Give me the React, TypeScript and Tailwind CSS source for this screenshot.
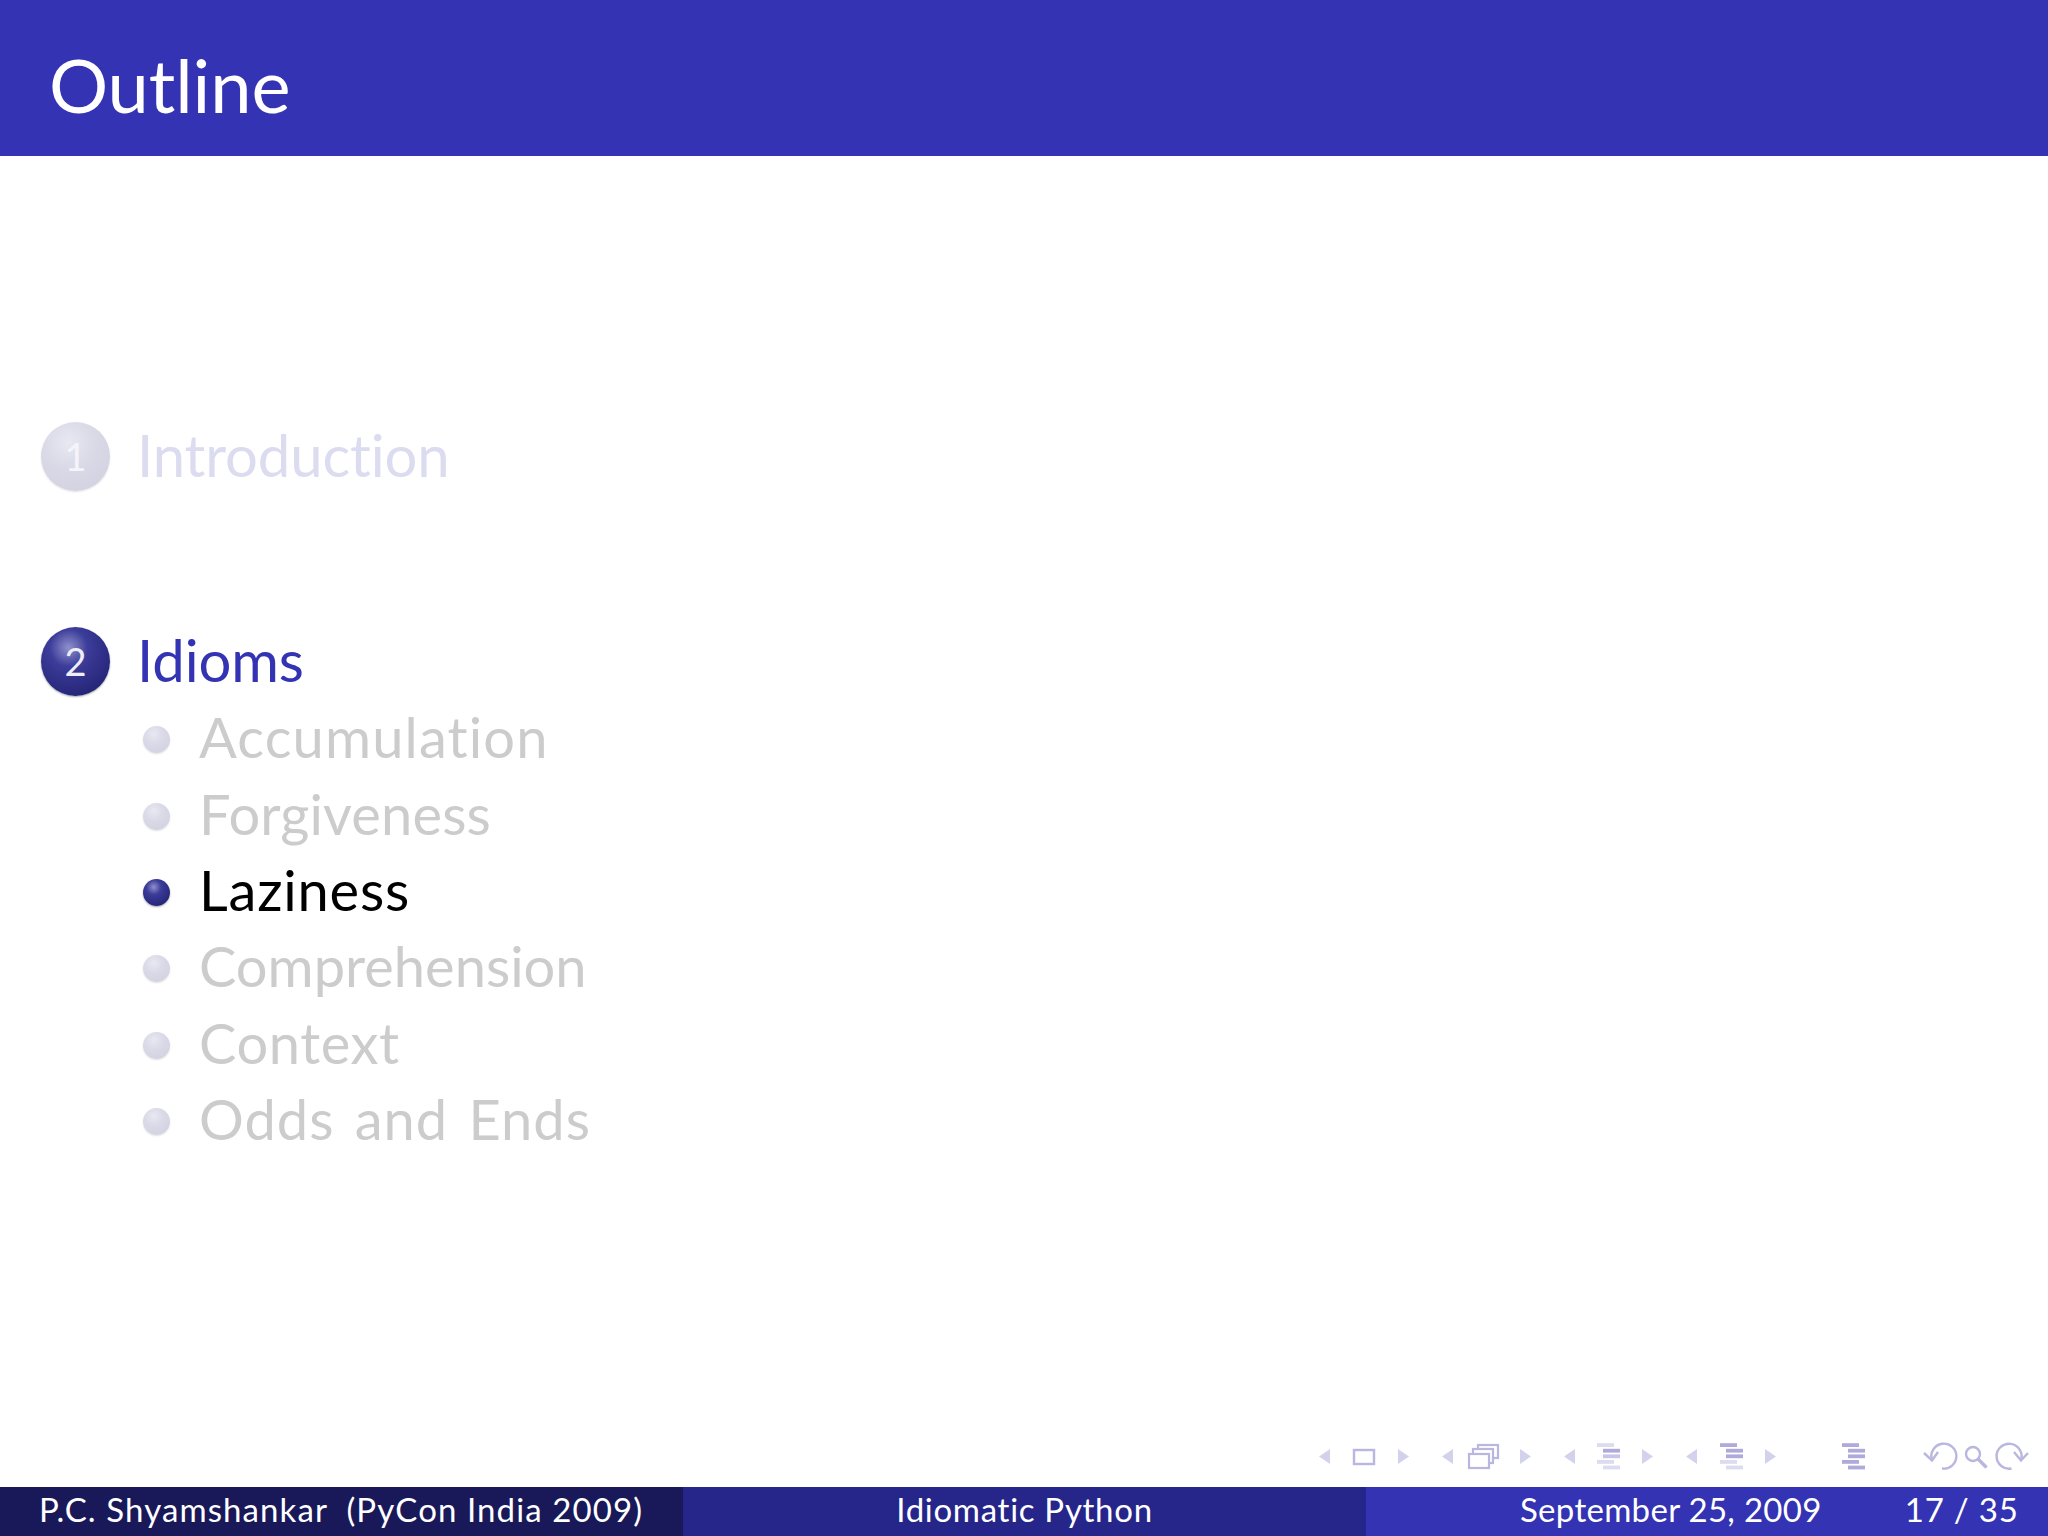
const sans = "font-['Lato','Open_Sans',sans-serif]";

function Ball({ size, faded, children }: { size: string; faded?: boolean; children?: React.ReactNode }) {
  return (
    <div className={`${size} flex shrink-0 items-center justify-center rounded-full ${faded
      ? "bg-[radial-gradient(circle_at_40%_30%,#e8e8f2_0%,#d8d8e6_45%,#cfcfdf_100%)] shadow-[0_1px_2px_rgba(0,0,0,0.12)]"
      : "bg-[radial-gradient(circle_at_40%_30%,#9090cc_0%,#3c3c9a_30%,#26267a_75%,#191955_100%)] shadow-[0_1px_2px_rgba(0,0,0,0.35)]"}`}>
      {children}
    </div>
  );
}

function Sub({ label, active, track }: { label: string; active?: boolean; track: string }) {
  return (
    <div className="flex h-[76.4px] items-center">
      <div className="ml-[4px] mt-[5px] w-[56px]"><Ball size="w-[27px] h-[27px]" faded={!active} /></div>
      <span className={`text-[56px] leading-none font-normal ${track} ${active ? "text-black" : "text-[#cccccc]"}`}>{label}</span>
    </div>
  );
}

function NavIcons() {
  const c = "#b9b6e0";
  const d = "#aeabdb";
  const f = "#dcdbf0";
  const m = "#c8c6e8";
  const left = (x: number) => <polygon points={`${x},1456.5 ${x + 11},1449 ${x + 11},1464`} fill="#d3d2ec" />;
  const right = (x: number) => <polygon points={`${x + 11},1456.5 ${x},1449 ${x},1464`} fill="#d3d2ec" />;
  const stack = (x: number, cols: string[]) => (
    <g>
      {[0, 1, 2, 3, 4].map((i) => (
        <rect key={i} x={i === 0 || i === 3 ? x : x + 6} y={1443.2 + i * 5.6} width="17" height="3.8" fill={cols[i]} />
      ))}
    </g>
  );
  return (
    <svg width="720" height="52" viewBox="1310 1435 720 52" className="block">
      {left(1319)}
      <rect x="1354" y="1450" width="20" height="14" fill="none" stroke={c} strokeWidth="2.4" />
      {right(1398)}
      {left(1442)}
      <g fill="#fff" stroke={c} strokeWidth="2.2">
        <rect x="1478" y="1445" width="20" height="13" />
        <rect x="1473" y="1449" width="20" height="14" />
        <rect x="1469" y="1454" width="20" height="14" />
      </g>
      {right(1520)}
      {left(1564)}
      {stack(1597, [f, d, m, f, f])}
      {right(1642)}
      {left(1686)}
      {stack(1720, [d, d, d, f, f])}
      {right(1765)}
      {stack(1842, [d, d, d, d, d])}
      <g fill="none" stroke={c} strokeWidth="2.4">
        <path d="M1932 1460 A12.5 12.5 0 1 1 1942 1468.5" />
        <path d="M1924 1453 L1932 1460.5 L1938 1452" />
        <circle cx="1973" cy="1454" r="7" />
        <path d="M1978 1459 L1986.5 1467.5" strokeWidth="3.4" />
        <path d="M2021 1460 A12.5 12.5 0 1 0 2011.5 1468.5" />
        <path d="M2028 1453 L2021 1460.5 L2014 1452" />
      </g>
    </svg>
  );
}

export default function App() {
  return (
    <div className={`flex h-[1536px] w-[2048px] flex-col overflow-hidden bg-white ${sans}`}>
      <header className="flex h-[156px] items-center bg-[#3333b3] pl-[49px] pt-[14px]">
        <h1 className="text-[74px] leading-none font-normal tracking-[-0.1px] text-white">Outline</h1>
      </header>
      <main className="flex-1 pt-[265px]">
        <div className="flex h-[70px] items-center pl-[41px]">
          <Ball size="w-[69px] h-[69px]" faded>
            <span className="text-[38px] font-normal text-[#f4f4fa]">1</span>
          </Ball>
          <span className="ml-[27px] -mt-[3px] text-[58px] leading-none font-normal tracking-[-0.1px] text-[#dcdcf0]">Introduction</span>
        </div>
        <div className="mt-[135px] flex h-[70px] items-center pl-[41px]">
          <Ball size="w-[69px] h-[69px]">
            <span className="text-[38px] font-normal text-[#eeeef8]">2</span>
          </Ball>
          <span className="ml-[27px] -mt-[3px] text-[58px] leading-none font-normal tracking-[-0.1px] text-[#3333b3]">Idioms</span>
        </div>
        <div className="pl-[139px] pt-[3px]">
          <Sub label="Accumulation" track="tracking-[1.15px]" />
          <Sub label="Forgiveness" track="tracking-[0.15px]" />
          <Sub label="Laziness" active track="tracking-[0.8px]" />
          <Sub label="Comprehension" track="tracking-[0px]" />
          <Sub label="Context" track="tracking-[0.6px]" />
          <Sub label="Odds and Ends" track="tracking-[1px] [word-spacing:5px]" />
        </div>
      </main>
      <div className="flex h-[52px] justify-end pr-[18px]"><NavIcons /></div>
      <footer className="flex h-[49px] items-center text-[33px] leading-none font-normal text-white">
        <div className="flex h-full w-[683px] items-center bg-[#191959] pb-[5px] pl-[39px] tracking-[1.1px] whitespace-pre">P.C. Shyamshankar  (PyCon India 2009)</div>
        <div className="flex h-full w-[683px] items-center justify-center bg-[#26268a] pb-[5px] tracking-[0.7px]">Idiomatic Python</div>
        <div className="flex h-full flex-1 items-center bg-[#3333b3] pb-[5px] pl-[154px] tracking-[0.3px] whitespace-pre">
          <span>September 25, 2009</span>
          <span className="ml-[83px] tracking-[0.8px]">17 / 35</span>
        </div>
      </footer>
    </div>
  );
}
